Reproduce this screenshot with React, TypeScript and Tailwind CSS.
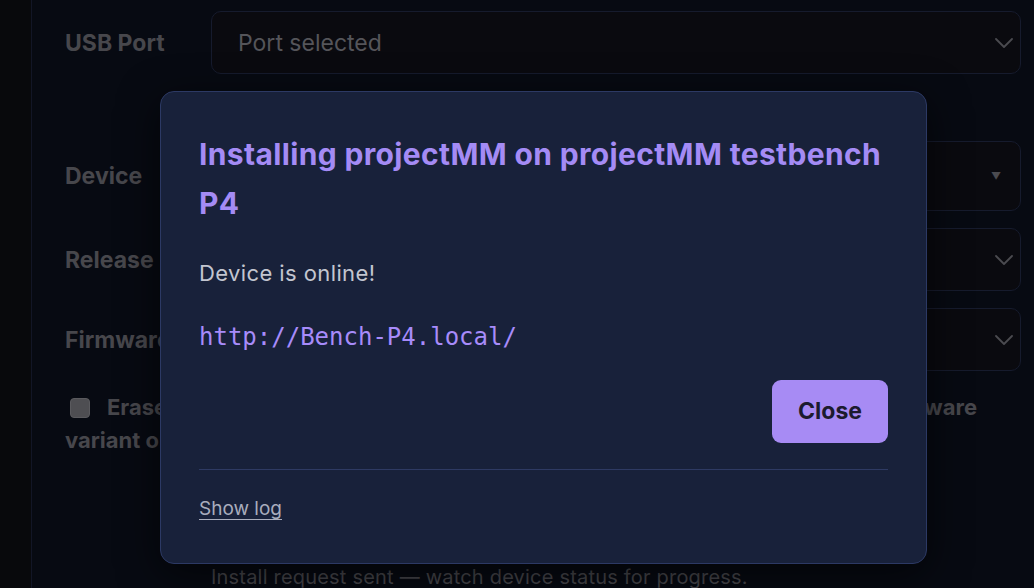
import React from "react";

function Chevron() {
  return (
    <svg width="18" height="10" viewBox="0 0 18 10" fill="none" className="shrink-0">
      <path d="M1 1l8 8 8-8" stroke="#4b4b50" strokeWidth="1.8" strokeLinecap="round" strokeLinejoin="round" />
    </svg>
  );
}

function Row({ label, value, h, caret }: { label: string; value?: string; h: string; caret?: boolean }) {
  return (
    <div className="flex items-center">
      <div className="w-[146px] text-[23px] font-bold text-[#47474c] leading-[30px]">{label}</div>
      <div
        className={`flex-1 ${h} rounded-[10px] border border-[#161b2d] bg-[#0a0a0f] flex items-center justify-between pl-[26px] pr-[7px]`}
      >
        <span className="text-[23px] text-[#55555a] leading-[30px]">{value}</span>
        {caret ? (
          <span className="text-[10px] text-[#4b4b50] mr-[12px]">▼</span>
        ) : (
          <Chevron />
        )}
      </div>
    </div>
  );
}

export default function App() {
  return (
    <div
      className="relative w-[1034px] h-[588px] overflow-hidden bg-[#070a12] flex"
      style={{ fontFamily: "Inter, 'Noto Sans', sans-serif" }}
    >
      <div className="w-[32px] shrink-0 bg-[#08090c] border-r border-[#121626]" />
      <div className="flex-1 pl-[33px] pr-[13px] pt-[11px]">
        <Row label="USB Port" value="Port selected" h="h-[63px]" />
        <div className="h-[67px]" />
        <Row label="Device" value="" h="h-[70px]" caret />
        <div className="h-[17px]" />
        <Row label="Release" value="" h="h-[63px]" />
        <div className="h-[17px]" />
        <Row label="Firmware" value="" h="h-[63px]" />
        <div className="mt-[20px] text-[22px] font-bold text-[#47474c] leading-[33px]">
          <div className="flex items-center">
            <span className="shrink-0 w-[20px] h-[20px] rounded-[4px] bg-[#4e4e52] border border-[#5a5a5e] ml-[5px] mr-[17px]" />
            <span className="w-[870px] text-justify [text-align-last:justify]">
              Erase flash before installing (recommended when switching firmware
            </span>
          </div>
          <div>variant or version)</div>
        </div>
        <div className="mt-[106px] pl-[146px] text-[20px] tracking-[0.2px] text-[#46464b] leading-[28px]">
          Install request sent — watch device status for progress.
        </div>
      </div>

      <div className="absolute left-[160px] top-[91px] w-[767px] rounded-[14px] border border-[#2c3964] bg-[#18213a] shadow-[0_10px_40px_rgba(0,0,0,0.6)] pl-[38px] pr-[38px] pt-[38px] pb-[39px]">
        <h2 className="text-[30px] font-bold leading-[49px] tracking-[0.35px] text-[#a48bf5]">
          Installing projectMM on projectMM testbench P4
        </h2>
        <p className="mt-[29px] text-[22px] leading-[33px] tracking-[0.4px] text-[#c3c6d0]">Device is online!</p>
        <p
          className="mt-[29px] text-[24px] leading-[36px] text-[#a78bfa]"
          style={{ fontFamily: "'DejaVu Sans Mono', monospace" }}
        >
          http://Bench-P4.local/
        </p>
        <div className="mt-[25px] flex justify-end">
          <button className="w-[116px] h-[63px] rounded-[9px] bg-[#a78bf4] text-[23px] font-bold text-[#1c1b2e]">
            Close
          </button>
        </div>
        <div className="mt-[26px] h-px bg-[#2e3a63]" />
        <div className="mt-[24px] text-[19px] leading-[30px] text-[#a9adbd] underline underline-offset-[4px]">
          Show log
        </div>
      </div>
    </div>
  );
}
